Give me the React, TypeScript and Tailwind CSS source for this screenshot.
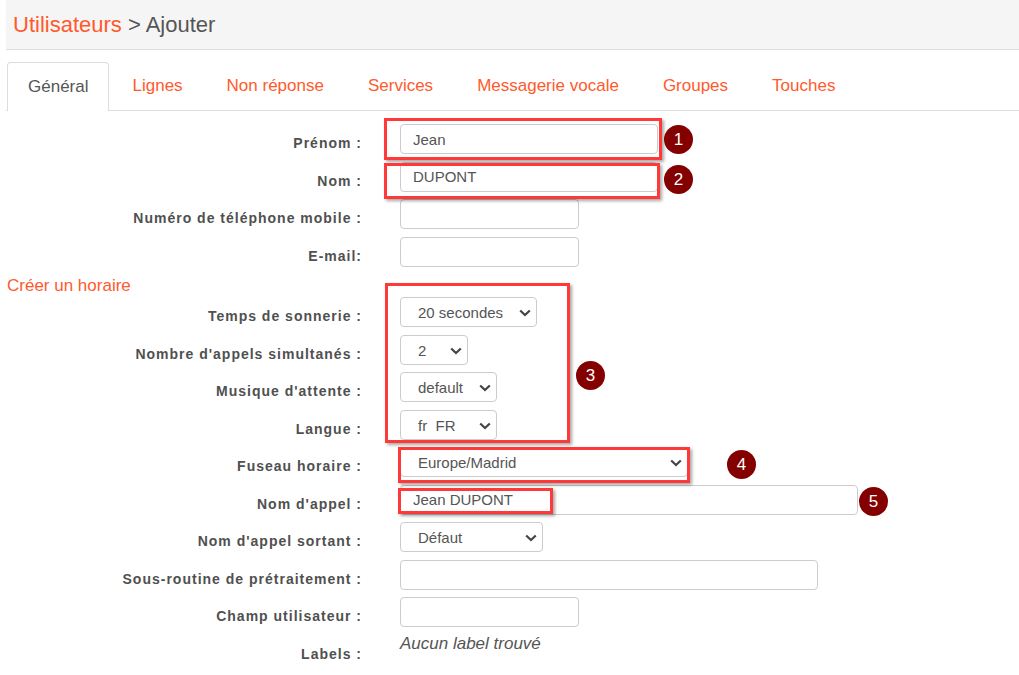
import React from "react";

type Field =
  | { label: string; kind: "input"; value?: string; w: string }
  | { label: string; kind: "select"; value: string; w: string }
  | { label: string; kind: "text"; value: string };

const topFields: Field[] = [
  { label: "Prénom :", kind: "input", value: "Jean", w: "w-[258px]" },
  { label: "Nom :", kind: "input", value: "DUPONT", w: "w-[258px]" },
  { label: "Numéro de téléphone mobile :", kind: "input", w: "w-[179px]" },
  { label: "E-mail:", kind: "input", w: "w-[179px]" },
];

const scheduleFields: Field[] = [
  { label: "Temps de sonnerie :", kind: "select", value: "20 secondes", w: "w-[137px]" },
  { label: "Nombre d'appels simultanés :", kind: "select", value: "2", w: "w-[68px]" },
  { label: "Musique d'attente :", kind: "select", value: "default", w: "w-[97px]" },
  { label: "Langue :", kind: "select", value: "fr  FR", w: "w-[97px]" },
  { label: "Fuseau horaire :", kind: "select", value: "Europe/Madrid", w: "w-[288px]" },
  { label: "Nom d'appel :", kind: "input", value: "Jean DUPONT", w: "w-[458px]" },
  { label: "Nom d'appel sortant :", kind: "select", value: "Défaut", w: "w-[143px]" },
  { label: "Sous-routine de prétraitement :", kind: "input", w: "w-[418px]" },
  { label: "Champ utilisateur :", kind: "input", w: "w-[179px]" },
  { label: "Labels :", kind: "text", value: "Aucun label trouvé" },
];

const tabs = ["Général", "Lignes", "Non réponse", "Services", "Messagerie vocale", "Groupes", "Touches"];

function Chevron() {
  return (
    <svg width="12" height="8" viewBox="0 0 12 8" className="pointer-events-none absolute right-[6px] top-[12px]">
      <path d="M1.2 1.5 L6 6 L10.8 1.5" fill="none" stroke="#444" strokeWidth="2.2" />
    </svg>
  );
}

function FieldRow({ f }: { f: Field }) {
  return (
    <div className="flex items-start">
      <div className="w-[356px] shrink-0 pt-[11px] text-right text-[14px] leading-[16px] font-bold tracking-[1px] text-[#505050]">
        {f.label}
      </div>
      <div className="ml-[38px]">
        {f.kind === "input" && (
          <input
            readOnly
            value={f.value ?? ""}
            className={`${f.w} h-[30px] rounded-[4px] border border-[#ccc] bg-white px-[12px] text-[15px] text-[#555] outline-none`}
          />
        )}
        {f.kind === "select" && (
          <div className={`relative ${f.w} h-[30px]`}>
            <div className="flex h-full w-full items-center whitespace-pre rounded-[4px] border border-[#ccc] bg-white pl-[17px] pt-[3px] text-[15px] text-[#555]">
              {f.value}
            </div>
            <Chevron />
          </div>
        )}
        {f.kind === "text" && (
          <div className="h-[30px] text-[17px] leading-[18px] italic text-[#555]">{f.value}</div>
        )}
      </div>
    </div>
  );
}

function RedBox({ cls }: { cls: string }) {
  return <div className={`pointer-events-none absolute border-[3px] border-[#ff3838] shadow-[2px_2px_3px_rgba(0,0,0,0.35)] ${cls}`} />;
}

function Badge({ n, cls }: { n: number; cls: string }) {
  return (
    <div className={`absolute flex h-[29px] w-[29px] items-center justify-center rounded-full bg-[#840000] text-[17px] text-white ${cls}`}>
      {n}
    </div>
  );
}

export default function App() {
  return (
    <div className="relative h-[675px] w-[1019px] overflow-hidden bg-white pl-[6px] font-['Liberation_Sans',Arial,sans-serif]">
      {/* header */}
      <div className="flex h-[50px] items-center border-b border-[#ddd] bg-[#f5f5f5] pl-[7px] text-[22px] text-[#555]">
        <span className="text-[#ff5a2d]">Utilisateurs</span>
        <span>&nbsp;&gt; Ajouter</span>
      </div>

      {/* tabs */}
      <div className="mt-[12px] flex h-[49px] items-stretch border-b border-[#ddd] pl-[1px]">
        {tabs.map((t, i) => (
          <div
            key={t}
            className={`mr-[2px] flex items-center px-[20px] text-[17px] ${
              i === 0
                ? "-mb-px rounded-t-[4px] border border-b-0 border-[#ddd] bg-white text-[#555]"
                : "border border-transparent text-[#ff5a2d]"
            }`}
          >
            {t}
          </div>
        ))}
      </div>

      {/* form */}
      <div className="mt-[13px] flex flex-col gap-[7.5px]">
        {topFields.map((f) => (
          <FieldRow key={f.label} f={f} />
        ))}
        <div className="-mb-[7.5px] pl-[1px] text-[17px] leading-[23px] text-[#ff5a2d]">Créer un horaire</div>
        {scheduleFields.map((f) => (
          <FieldRow key={f.label} f={f} />
        ))}
      </div>

      {/* annotations */}
      <RedBox cls="left-[384px] top-[118px] w-[278px] h-[42px]" />
      <RedBox cls="left-[384px] top-[163px] w-[276px] h-[36px]" />
      <RedBox cls="left-[385px] top-[283px] w-[185px] h-[160px]" />
      <RedBox cls="left-[398px] top-[447px] w-[292px] h-[36px]" />
      <RedBox cls="left-[398px] top-[488px] w-[155px] h-[26px]" />
      <Badge n={1} cls="left-[664px] top-[125px]" />
      <Badge n={2} cls="left-[664px] top-[165px]" />
      <Badge n={3} cls="left-[576px] top-[361px]" />
      <Badge n={4} cls="left-[727px] top-[450px]" />
      <Badge n={5} cls="left-[859px] top-[487px]" />
    </div>
  );
}
